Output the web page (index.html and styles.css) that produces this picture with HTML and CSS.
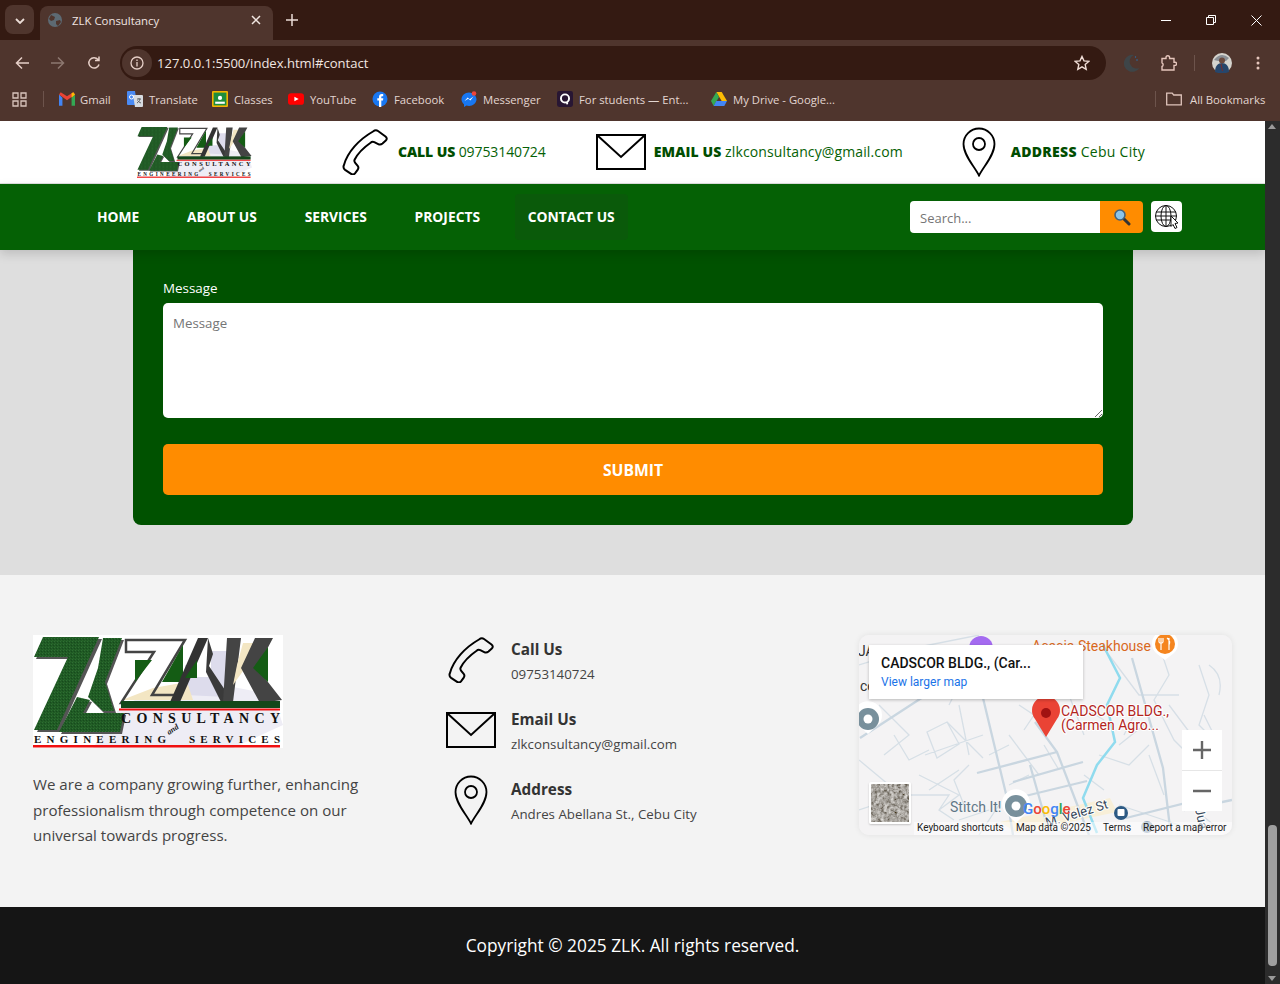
FILE: index.html
```html
<!DOCTYPE html>
<html lang="en">
<head>
    <meta charset="UTF-8">
    <meta name="viewport" content="width=device-width, initial-scale=1.0">
    <title>ZLK Consultancy</title>
    <link rel="stylesheet" href="styles.css">
</head>
<body>
    <!-- shared drawings -->
    <svg class="defs" width="0" height="0">
        <defs>
            <pattern id="grass" width="3" height="3" patternUnits="userSpaceOnUse">
                <rect width="3" height="3" fill="#1f5a24"/>
                <rect width="1" height="1" fill="#2f6e33"/>
                <rect x="2" y="1" width="1" height="1" fill="#174a1c"/>
                <rect x="1" y="2" width="1" height="1" fill="#286429"/>
            </pattern>
            <filter id="aerial" x="0" y="0" width="100%" height="100%">
                <feTurbulence type="fractalNoise" baseFrequency="0.3" numOctaves="3" seed="4"/>
                <feColorMatrix values="0.700 0.700 0 0 -0.300  0.700 0.700 0 0 -0.320  0.700 0.700 0 0 -0.350  0 0 0 0 1"/>
            </filter>
        </defs>
        <symbol id="phone" viewBox="0 0 46 46">
            <path d="M31 2.500c2-1.600 3.600-1.500 5-.5l7.500 5.500c1.600 1.300 1.600 2.800.3 4l-3.300 3c-1.500 1.300-2.700 1.400-4.300.6l-3.900-1.900c-1.400-.7-2.500-.5-3.700.5C21 19 15.500 25 12.700 30.500c-.6 1.200-.4 2.300.5 3.400l2.500 3c1 1.300.9 2.600-.1 4l-2.600 3.500c-1.100 1.300-2.400 1.400-3.900.4l-6-3.900c-1.600-1.200-2-2.600-1.300-4.500C5.500 23 17 10.500 31 2.500z" fill="none" stroke="#000" stroke-width="2"/>
        </symbol>
        <symbol id="mail" viewBox="0 0 50 36">
            <path d="M1 1h48v34H1zM1.500 1.500L25 23 48.500 1.500" fill="none" stroke="#000" stroke-width="2"/>
        </symbol>
        <symbol id="pin" viewBox="0 0 34 50">
            <path d="M17 48.500C12 39 1.500 28 1.500 17a15.500 15.500 0 0 1 31 0C32.500 28 22 39 17 48.500z" fill="none" stroke="#000" stroke-width="1.800"/>
            <circle cx="17" cy="17" r="6" fill="none" stroke="#000" stroke-width="1.800"/>
        </symbol>
    </svg>

    <div class="tabstrip">
        <button class="tab-menu"><svg width="10" height="6" viewBox="0 0 10 6"><path d="M1 1l4 4 4-4" fill="none" stroke="#eadcd6" stroke-width="1.800"/></svg></button>
        <div class="tab">
            <svg width="14" height="14" viewBox="0 0 14 14"><circle cx="7" cy="7" r="7" fill="#5d6a73"/><path d="M3 2l4 2-1 3-3 1-2-2zM8 8l4-1 1 2-3 4-2-2z" fill="#4f352d"/></svg>
            <span class="tab-title">ZLK Consultancy</span>
            <svg width="10" height="10" viewBox="0 0 10 10"><path d="M1 1l8 8M9 1l-8 8" stroke="#f1e6e1" stroke-width="1.500"/></svg>
        </div>
        <svg class="tab-new" width="12" height="12" viewBox="0 0 12 12"><path d="M6 0v12M0 6h12" stroke="#eadcd6" stroke-width="1.500"/></svg>
        <div class="win-btns">
            <svg width="10" height="10" viewBox="0 0 10 10"><path d="M0 5.500h10" stroke="#fff"/></svg>
            <svg width="10" height="10" viewBox="0 0 10 10"><path d="M.5 2.500h7v7h-7zM2.500 2.500v-2h7v7h-2" fill="none" stroke="#fff"/></svg>
            <svg width="11" height="11" viewBox="0 0 11 11"><path d="M.5.500l10 10M10.500.500l-10 10" stroke="#fff"/></svg>
        </div>
    </div>

    <div class="toolbar">
        <svg class="tool" width="14" height="14" viewBox="0 0 14 14"><path d="M14 7H2M7 1.500L1.500 7 7 12.500" fill="none" stroke="#e6cfc7" stroke-width="1.500"/></svg>
        <svg class="tool" width="14" height="14" viewBox="0 0 14 14"><path d="M0 7h12M7 1.500L12.500 7 7 12.500" fill="none" stroke="#8d7870" stroke-width="1.500"/></svg>
        <svg class="tool" width="14" height="14" viewBox="0 0 14 14"><path d="M12 8.500A5.200 5.200 0 1 1 11 3.500M12 .5v4H8" fill="none" stroke="#e6cfc7" stroke-width="1.500"/></svg>
        <div class="omnibox">
            <span class="site-info"><svg width="14" height="14" viewBox="0 0 14 14"><circle cx="7" cy="7" r="6" fill="none" stroke="#e6cfc7" stroke-width="1.300"/><path d="M7 6v4.500M7 3.500v1.400" stroke="#e6cfc7" stroke-width="1.300"/></svg></span>
            <span class="url">127.0.0.1:5500/index.html#contact</span>
            <svg class="star" width="16" height="16" viewBox="0 0 16 16"><path d="M8 1.500l2 4.400 4.800.5-3.600 3.200 1 4.700L8 11.900l-4.200 2.400 1-4.700L1.200 6.400 6 5.900z" fill="none" stroke="#f1dfd8" stroke-width="1.400"/></svg>
        </div>
        <svg class="ext-moon" width="16" height="18" viewBox="0 0 16 18"><path d="M10 1a8.500 8.500 0 1 0 5.500 13A6.500 6.500 0 0 1 10 1z" fill="#3e4548"/><circle cx="13" cy="6" r=".8" fill="#2a6fa8"/><circle cx="11.500" cy="3" r=".7" fill="#2a6fa8"/></svg>
        <svg class="ext-puzzle" width="16" height="16" viewBox="0 0 16 16"><path d="M1 3.500h4V2.500a1.800 1.800 0 0 1 3.600 0v1h4.400v3.700h1a1.600 1.600 0 0 1 0 3.200h-1V15H1v-3.500a2 2 0 0 0 0-3.600z" fill="none" stroke="#e6c6bc" stroke-width="1.400"/></svg>
        <span class="tool-sep"></span>
        <svg class="avatar" width="20" height="20" viewBox="0 0 20 20"><circle cx="10" cy="10" r="10" fill="#d5d3cd"/><path d="M2 7q7-9 15-2l-3 3H6z" fill="#8a8f95"/><path d="M3 19c0-6 3-9 7-9s7 3 7 9l-3 1H6z" fill="#27466b"/><circle cx="10" cy="7.500" r="3" fill="#6b4a3e"/><path d="M9 11l1.500 7" stroke="#7a2b2b"/></svg>
        <svg class="kebab" width="4" height="14" viewBox="0 0 4 14"><circle cx="2" cy="2" r="1.500" fill="#e6c6bc"/><circle cx="2" cy="7" r="1.500" fill="#e6c6bc"/><circle cx="2" cy="12" r="1.500" fill="#e6c6bc"/></svg>
    </div>

    <div class="bookmarks">
        <svg class="apps" width="15" height="15" viewBox="0 0 15 15"><path d="M1 1h5v5H1zM9 1h5v5H9zM1 9h5v5H1zM9 9h5v5H9z" fill="none" stroke="#d9c4bc" stroke-width="1.300"/></svg>
        <span class="bm-sep"></span>
        <span class="bm bm-gmail"><svg viewBox="0 0 14 12"><path d="M0 2v10h3V5z" fill="#4285f4"/><path d="M14 2v10h-3V5z" fill="#34a853"/><path d="M0 2l7 5 7-5-1.500-2L7 3.500 1.500 0z" fill="#ea4335"/><path d="M11 5l3-3-1.500-2L11 1z" fill="#fbbc04"/></svg>Gmail</span>
        <span class="bm bm-translate"><svg viewBox="0 0 16 16"><path d="M0 1a1 1 0 0 1 1-1h7l2 14H1a1 1 0 0 1-1-1z" fill="#4a8af4"/><path d="M6 4h9a1 1 0 0 1 1 1v10a1 1 0 0 1-1 1H8z" fill="#d7dbe0"/><path d="M10 8h4M12 7v1M13 8c-.5 2-1.500 3-3 4M10.500 9.500c.8 1.200 2 2 3.500 2.500" fill="none" stroke="#5f6368"/><circle cx="4.500" cy="6" r="2" fill="none" stroke="#fff"/></svg>Translate</span>
        <span class="bm bm-classes"><svg viewBox="0 0 15 15"><rect width="15" height="15" rx="1" fill="#f4b400"/><rect x="1.500" y="1.500" width="12" height="12" fill="#1e8e3e"/><rect x="3" y="10" width="9" height="2" fill="#fff"/><circle cx="7.500" cy="6.500" r="2" fill="#fff"/></svg>Classes</span>
        <span class="bm bm-youtube"><svg viewBox="0 0 15 13"><rect y="1" width="15" height="11" rx="3" fill="#f00"/><path d="M6 4.500l4 2-4 2z" fill="#fff"/></svg>YouTube</span>
        <span class="bm bm-facebook"><svg viewBox="0 0 15 16"><circle cx="7.500" cy="8" r="7.500" fill="#1877f2"/><path d="M6.500 16V9.500H4.800V7.300h1.700V6c0-1.900 1-3 2.800-3h1.400v2.200H9.700c-.7 0-.9.400-.9 1v1.100h2l-.3 2.200H8.800V16z" fill="#fff"/></svg>Facebook</span>
        <span class="bm bm-messenger"><svg viewBox="0 0 15 16"><path d="M7.500 1.500C3.400 1.500 0 4.500 0 8.300c0 2 1 3.800 2.500 5v2.700l2.500-1.400c.8.200 1.600.4 2.500.4 4.100 0 7.500-3 7.500-6.700s-3.400-6.800-7.500-6.800z" fill="#1877f2"/><path d="M3 10l3.200-3.500 2 1.700L12 5.500 8.800 9.500l-2-1.700z" fill="#fff"/><circle cx="12.500" cy="2.500" r="2.300" fill="#f04438"/></svg>Messenger</span>
        <span class="bm bm-quill"><svg viewBox="0 0 15 15"><rect width="15" height="15" rx="2" fill="#281633"/><circle cx="7.500" cy="7" r="3.800" fill="none" stroke="#fff" stroke-width="1.800"/><path d="M9.500 10.500v2" stroke="#fff" stroke-width="1.800"/></svg>For students — Ent...</span>
        <span class="bm bm-drive"><svg viewBox="0 0 16 14"><path d="M5.300 0h5.400l5.300 9h-5.300z" fill="#fbbc04"/><path d="M5.300 0L0 9l2.700 5 5.300-9z" fill="#34a853"/><path d="M5.300 9H16l-2.700 5H2.700z" fill="#4285f4"/></svg>My Drive - Google...</span>
        <span class="bm-sep bm-sep-end"></span>
        <span class="bm bm-all"><svg viewBox="0 0 16 13"><path d="M.7 12.300V.7h5.500l1.500 1.800h7.600v9.800z" fill="none" stroke="#dfc4bb" stroke-width="1.300"/></svg>All Bookmarks</span>
    </div>

    <div class="viewport">
        <div class="page">
            <header class="topbar">
                <svg class="top-logo" viewBox="0 0 250 113">
                    <path d="M85 75Q130 45 175 47L240 60 250 90 200 113H60z" fill="#eeedf5"/>
                    <path d="M152 60V30h12v12h14V16h16v46z" fill="#dddcec"/>
                    <path d="M12 4h57L27 97H4L38 24H3z" fill="#555"/>
                    <path d="M10 2h56L24 95H1L35 22H1z" fill="url(#grass)"/>
                    <path d="M72 5h19L74 49l9 29H71L57 64 67 35z" fill="#555"/>
                    <path d="M70 3h19L72 47l9 29H70L55 62 65 33z" fill="url(#grass)"/>
                    <path d="M46 64L28 99h61l4-19H52l7-13z" fill="#555"/>
                    <path d="M44 62L26 97h61l4-19H50l7-13z" fill="url(#grass)"/>
                    <path d="M89 65l31-12 34-6 6 18z" fill="#f3e6c3"/>
                    <path d="M93 5H152L119 60H146L140 68H88L121 17H93z" fill="none" stroke="#444" stroke-width="2.500"/>
                    <path d="M102 25h17l-17 22zM150 10l-21 37h21z" fill="#145c14"/>
                    <path d="M165 3h10l-28 64h-10z" fill="#333"/>
                    <path d="M175 3l5 16-4 12 24 36h-12l-15-30z" fill="#3a3a3a"/>
                    <path d="M164 25v18h-12z" fill="#145c14"/>
                    <path d="M194 3h14l-8 64h-10z" fill="#444"/>
                    <path d="M210 8h20l-30 42 4-20z" fill="#f3e6c3"/>
                    <path d="M222 3h18l-16 30 25 32-22 3-19-35z" fill="#444"/>
                    <path d="M235 12l-15 21 15 14z" fill="#145c14"/>
                    <rect x="88" y="66" width="159" height="7" fill="#14471a"/>
                    <rect x="86" y="73.500" width="161" height="2" fill="#f01010"/>
                    <rect y="110" width="247" height="2.500" fill="#f01010"/>
                    <text x="88" y="88" class="logo-big" textLength="159">CONSULTANCY</text>
                    <text x="1" y="108" class="logo-small" textLength="132">ENGINEERING</text>
                    <text x="156" y="108" class="logo-small" textLength="91">SERVICES</text>
                    <text x="136" y="100" class="logo-and" transform="rotate(-35 136 100)">and</text>
                </svg>
                <div class="top-item top-call">
                    <svg class="icon-phone"><use href="#phone"/></svg>
                    <p><b>CALL US</b> 09753140724</p>
                </div>
                <div class="top-item top-email">
                    <svg class="icon-mail"><use href="#mail"/></svg>
                    <p><b>EMAIL US</b> zlkconsultancy@gmail.com</p>
                </div>
                <div class="top-item top-address">
                    <svg class="icon-pin"><use href="#pin"/></svg>
                    <p><b>ADDRESS</b> Cebu City</p>
                </div>
            </header>

            <nav class="mainnav">
                <a href="#home">HOME</a>
                <a href="#about">ABOUT US</a>
                <a href="#services">SERVICES</a>
                <a href="#projects">PROJECTS</a>
                <a href="#contact" class="active">CONTACT US</a>
                <form class="search">
                    <input type="text" placeholder="Search...">
                    <button type="button"><svg width="18" height="18" viewBox="0 0 18 18"><path d="M10.500 10.500l5.500 5.500" stroke="#333" stroke-width="3" stroke-linecap="round"/><circle cx="7" cy="7" r="5" fill="#8cc4ea" stroke="#44617a" stroke-width="1.600"/></svg></button>
                </form>
                <span class="lang"><svg width="26" height="26" viewBox="0 0 26 26"><g fill="none" stroke="#111" stroke-width="1"><circle cx="12" cy="12" r="10.500"/><ellipse cx="12" cy="12" rx="5" ry="10.500"/><path d="M12 1.500v21M2 8h20M2 16h20M1.500 12h21"/></g><path d="M17 12l7 7-3 .5 2 4-2 1-2-4-2 2z" fill="#fff" stroke="#111"/></svg></span>
            </nav>

            <section class="contact">
                <form class="contact-form">
                    <label for="message">Message</label>
                    <textarea id="message" placeholder="Message"></textarea>
                    <button type="button">SUBMIT</button>
                </form>
            </section>

            <footer class="site-footer">
                <div class="about">
                    <svg class="footer-logo" viewBox="0 0 250 113">
                        <rect width="250" height="113" fill="#fff"/>
                        <path d="M85 75Q130 45 175 47L240 60 250 90 200 113H60z" fill="#eeedf5"/>
                        <path d="M152 60V30h12v12h14V16h16v46z" fill="#dddcec"/>
                        <path d="M12 4h57L27 97H4L38 24H3z" fill="#555"/>
                        <path d="M10 2h56L24 95H1L35 22H1z" fill="url(#grass)"/>
                        <path d="M72 5h19L74 49l9 29H71L57 64 67 35z" fill="#555"/>
                        <path d="M70 3h19L72 47l9 29H70L55 62 65 33z" fill="url(#grass)"/>
                        <path d="M46 64L28 99h61l4-19H52l7-13z" fill="#555"/>
                        <path d="M44 62L26 97h61l4-19H50l7-13z" fill="url(#grass)"/>
                        <path d="M89 65l31-12 34-6 6 18z" fill="#f3e6c3"/>
                        <path d="M93 5H152L119 60H146L140 68H88L121 17H93z" fill="none" stroke="#444" stroke-width="2.500"/>
                        <path d="M102 25h17l-17 22zM150 10l-21 37h21z" fill="#145c14"/>
                        <path d="M165 3h10l-28 64h-10z" fill="#333"/>
                        <path d="M175 3l5 16-4 12 24 36h-12l-15-30z" fill="#3a3a3a"/>
                        <path d="M164 25v18h-12z" fill="#145c14"/>
                        <path d="M194 3h14l-8 64h-10z" fill="#444"/>
                        <path d="M210 8h20l-30 42 4-20z" fill="#f3e6c3"/>
                        <path d="M222 3h18l-16 30 25 32-22 3-19-35z" fill="#444"/>
                        <path d="M235 12l-15 21 15 14z" fill="#145c14"/>
                        <rect x="88" y="66" width="159" height="7" fill="#14471a"/>
                        <rect x="86" y="73.500" width="161" height="2" fill="#f01010"/>
                        <rect y="110" width="247" height="2.500" fill="#f01010"/>
                        <text x="88" y="88" class="logo-big" textLength="159">CONSULTANCY</text>
                        <text x="1" y="108" class="logo-small" textLength="132">ENGINEERING</text>
                        <text x="156" y="108" class="logo-small" textLength="91">SERVICES</text>
                        <text x="136" y="100" class="logo-and" transform="rotate(-35 136 100)">and</text>
                    </svg>
                    <p>We are a company growing further, enhancing professionalism through competence on our universal towards progress.</p>
                </div>
                <div class="reach">
                    <div class="reach-item">
                        <span class="reach-icon"><svg class="icon-phone"><use href="#phone"/></svg></span>
                        <div><h4>Call Us</h4><p>09753140724</p></div>
                    </div>
                    <div class="reach-item">
                        <span class="reach-icon"><svg class="icon-mail"><use href="#mail"/></svg></span>
                        <div><h4>Email Us</h4><p>zlkconsultancy@gmail.com</p></div>
                    </div>
                    <div class="reach-item">
                        <span class="reach-icon"><svg class="icon-pin"><use href="#pin"/></svg></span>
                        <div><h4>Address</h4><p>Andres Abellana St., Cebu City</p></div>
                    </div>
                </div>
                <div class="map">
                    <svg class="map-roads" width="373" height="200" viewBox="0 0 373 200">
                        <rect width="373" height="200" fill="#f4f3f4"/>
                        <path d="M141 187L251 163l7 14-100 21z" fill="#f8efd8"/>
                        <g fill="none" stroke="#d6dfe6" stroke-width="1.300">
                            <path d="M0 30L60 12 120 0M20 70l30 30-25 20M68 97l20-10 12 22-22 14zM88 87l36 36M100 70l10 50M66 120l58-20M150 100l30 40M150 150l20-10M10 150l40 10M50 160h40l-10 15 15 10M60 140l40 20-20 15M100 135l-30 20M300 10l10 30-15 25 20 40 30 30M340 30l10 30-10 30 20 20M350 30q15 10 10 30M310 70l30 40M250 20l30 40h40M0 175l30-10M240 120l30 10 20-20M140 170l-20 30M260 170l60 20M100 50l-10 20M150 110l-20 10M160 70l15 10-10 15M220 70l25 15M200 135l-15-25M210 60l15 40M260 110l25-20M330 170l25 20M35 100l15 25 20-10M0 125l30 25M110 130l-15 15 10 25M130 175l-30 10M280 70l-15 30M290 120l15 40M345 80l15 30M225 140l20 15"/>
                        </g>
                        <g fill="none" stroke="#c9d6e0" stroke-width="2.300">
                            <path d="M1 103L64 62 100 40M124 63l24 100 6 37M176 87l22 30 23 60 9 23M118 138l80-21M154 147l70-20M158 163l70-17M171 130l17 60M273 23l31 110 7 60M325 175l48-10M267 183l60-15 20 5"/>
                        </g>
                        <path d="M244 10l17 33-13 27 8 37-18 23-14 33 14 35" fill="none" stroke="#90dbee" stroke-width="2.500"/>
                        <circle cx="122" cy="13" r="12" fill="#a46bf0"/>
                        <text x="173" y="16" class="map-poi">Acacia Steakhouse</text>
                        <path d="M306 25l-9-7a13 13 0 1 1 18 0z" fill="#fff"/>
                        <circle cx="306" cy="9" r="10" fill="#f5851f"/>
                        <path d="M302 3v12M310 3v12M300 3v4q2 3 4 0v-4M308 3q4 3 2 7" fill="none" stroke="#fff" stroke-width="1.200"/>
                        <text x="-1" y="21" class="map-label">JA</text>
                        <text x="1" y="56" class="map-label">ce</text>
                        <path d="M9 99l-10-9a14 14 0 1 1 20 0z" fill="#fff"/>
                        <circle cx="9" cy="84" r="11" fill="#78909c"/><circle cx="9" cy="84" r="4.500" fill="#fff"/>
                        <path d="M187 102l-11-18a14 14 0 1 1 22 0z" fill="#ea4335"/>
                        <circle cx="187" cy="78" r="5" fill="#a11212"/>
                        <text x="202" y="81" class="map-pin-label">CADSCOR BLDG.,</text>
                        <text x="202" y="95" class="map-pin-label">(Carmen Agro...</text>
                        <text x="91" y="177" class="map-stitch">Stitch It!</text>
                        <path d="M157 188l-10-10a14 14 0 1 1 20 0z" fill="#fff"/>
                        <circle cx="157" cy="171" r="11" fill="#78909c"/><circle cx="157" cy="171" r="4.500" fill="#fff"/>
                        <text x="188" y="192" class="map-street" transform="rotate(-17 188 192)">M. Velez St</text>
                        <circle cx="262" cy="178" r="7" fill="#2d5a84"/>
                        <rect x="258.500" y="174" width="7" height="7" rx="1" fill="#fff"/>
                        <circle cx="288" cy="192" r="6" fill="#2d5a84" opacity="0.5"/>
                        <text x="164" y="179" class="map-google"><tspan fill="#4285f4">G</tspan><tspan fill="#ea4335">o</tspan><tspan fill="#fbbc04">o</tspan><tspan fill="#4285f4">g</tspan><tspan fill="#34a853">l</tspan><tspan fill="#ea4335">e</tspan></text>
                        <text x="336" y="174" class="map-street" transform="rotate(78 336 174)">Jua</text>
                        <rect x="55" y="187" width="318" height="13" fill="#fff" opacity="0.5"/>
                        <g class="map-foot">
                            <text x="58" y="196">Keyboard shortcuts</text>
                            <text x="157" y="196">Map data ©2025</text>
                            <text x="244" y="196">Terms</text>
                            <text x="284" y="196">Report a map error</text>
                        </g>
                    </svg>
                    <div class="map-card">
                        <strong>CADSCOR BLDG., (Car...</strong>
                        <a href="#map">View larger map</a>
                    </div>
                    <div class="map-zoom">
                        <span><svg width="18" height="18" viewBox="0 0 18 18"><path d="M9 0v18M0 9h18" stroke="#666" stroke-width="2.400"/></svg></span>
                        <span><svg width="18" height="18" viewBox="0 0 18 18"><path d="M0 9h18" stroke="#666" stroke-width="2.400"/></svg></span>
                    </div>
                    <div class="map-thumb"><svg width="38" height="38"><rect width="38" height="38" filter="url(#aerial)"/></svg></div>
                </div>
            </footer>

            <div class="copyright">Copyright © 2025 ZLK. All rights reserved.</div>
        </div>

        <div class="scrollbar">
            <i class="arrow-up"></i>
            <span class="thumb"></span>
            <i class="arrow-down"></i>
        </div>
    </div>
</body>
</html>
```

FILE: styles.css
```css
* {
    box-sizing: border-box;
}
html, body {
    margin: 0;
    height: 984px;
    overflow: hidden;
}
body {
    font-family: "Open Sans", "Noto Sans", sans-serif;
    display: flex;
    flex-direction: column;
    background-color: #4f352d;
}
.defs {
    position: absolute;
}
p, h4 {
    margin: 0;
}

/* browser chrome */
.tabstrip {
    height: 40px;
    flex: none;
    display: flex;
    align-items: center;
    background-color: #341a12;
    padding-left: 5px;
}
.tab-menu {
    width: 29px;
    height: 29px;
    margin-top: -1px;
    border: none;
    border-radius: 8px;
    background-color: #4f352d;
    padding: 0;
}
.tab {
    width: 233px;
    height: 34px;
    margin: 6px 0 0 6px;
    padding: 0 12px 6px 8px;
    display: flex;
    align-items: center;
    background-color: #4f352d;
    border-radius: 8px 8px 0 0;
}
.tab-title {
    flex: 1;
    margin-left: 10px;
    color: #efe5e1;
    font-size: 11.400px;
}
.tab-new {
    margin-left: 13px;
}
.win-btns {
    margin-left: auto;
    width: 138px;
    display: flex;
    justify-content: space-between;
    padding: 0 18px 0 19px;
}
.toolbar {
    height: 44px;
    flex: none;
    display: flex;
    align-items: center;
    background-color: #4f352d;
    padding: 2px 0 0 15px;
}
.tool {
    margin-right: 22px;
}
.toolbar .tool:nth-child(3) {
    margin-right: 19px;
}
.omnibox {
    width: 986px;
    height: 34px;
    display: flex;
    align-items: center;
    background-color: #341a12;
    border-radius: 17px;
    padding: 0 16px 0 2px;
}
.site-info {
    width: 30px;
    height: 28px;
    display: flex;
    align-items: center;
    justify-content: center;
    background-color: #4f352d;
    border-radius: 14px;
}
.url {
    margin-left: 5px;
    color: #f1e6e1;
    font-size: 13.050px;
    flex: 1;
}
.ext-moon {
    margin-left: 18px;
}
.ext-puzzle {
    margin-left: 21px;
}
.tool-sep {
    width: 1px;
    height: 16px;
    margin-left: 17px;
    background-color: #6d544c;
}
.avatar {
    margin-left: 17px;
}
.kebab {
    margin-left: 24px;
}
.bookmarks {
    height: 37px;
    flex: none;
    display: flex;
    align-items: center;
    gap: 16px;
    background-color: #4f352d;
    padding: 0 0 7px 12px;
}
.bm {
    flex: none;
    display: flex;
    align-items: center;
    gap: 6px;
    color: #e3d6d1;
    font-size: 11.300px;
    white-space: nowrap;
}
.bm svg {
    width: 16px;
    height: 16px;
    flex: none;
}
.bm-gmail { width: 52px; margin-left: -1px; gap: 5px; }
.bm-translate { width: 69px; }
.bm-classes { width: 60px; }
.bm-youtube { width: 68px; }
.bm-facebook { width: 73px; }
.bm-messenger { width: 80px; }
.bm-quill { width: 138px; }
.bm-drive { width: 128px; }
.bm-sep {
    width: 1px;
    height: 16px;
    background-color: #6d544c;
}
.bm-sep-end {
    margin-left: auto;
}
.bm-all {
    width: 100px;
    gap: 8px;
    margin-right: 14px;
    margin-left: -6px;
}

/* page */
.viewport {
    flex: 1;
    min-height: 0;
    display: flex;
}
.page {
    flex: 1;
    min-width: 0;
    background-color: #dedede;
}
.scrollbar {
    width: 15px;
    position: relative;
    background-color: #2c2c2c;
}
.scrollbar i {
    position: absolute;
    left: 3px;
    border-left: 4.500px solid transparent;
    border-right: 4.500px solid transparent;
}
.arrow-up {
    top: 3px;
    border-bottom: 5px solid #9a9a9a;
}
.arrow-down {
    bottom: 3px;
    border-top: 5px solid #9a9a9a;
}
.thumb {
    position: absolute;
    left: 3px;
    right: 3px;
    top: 704px;
    height: 141px;
    border-radius: 4px;
    background-color: #9f9f9f;
}

.topbar {
    height: 63px;
    display: flex;
    align-items: center;
    background-color: #fff;
    padding-left: 137px;
    border-bottom: 1px solid #e0e0e0;
}
.top-logo {
    width: 115px;
    height: 52px;
}
.top-item {
    display: flex;
    align-items: center;
    font-size: 14px;
    color: #056105;
    white-space: nowrap;
}
.top-item p {
    margin-top: -2px;
}
.top-item b {
    color: #004d00;
    font-weight: 800;
}
.icon-phone {
    width: 46px;
    height: 46px;
}
.icon-mail {
    width: 50px;
    height: 36px;
}
.icon-pin {
    width: 34px;
    height: 50px;
}
.top-call {
    margin-left: 90px;
    gap: 10px;
    letter-spacing: -0.1px;
}
.top-email {
    margin-left: 50px;
    gap: 8px;
    letter-spacing: 0.12px;
}
.top-address {
    margin-left: 59px;
    gap: 15px;
    letter-spacing: 0.28px;
}
.mainnav {
    height: 66px;
    display: flex;
    align-items: center;
    gap: 21.800px;
    padding-left: 84px;
    background-color: #056105;
    box-shadow: 0 4px 10px rgba(0, 0, 0, 0.15);
    position: relative;
}
.mainnav a {
    height: 46px;
    padding: 0 13px 2px;
    display: flex;
    align-items: center;
    color: #fff;
    font-size: 13.800px;
    font-weight: 700;
    text-decoration: none;
    border-radius: 4px;
}
.mainnav a.active {
    background-color: #0a5a0a;
}
.search {
    margin-left: auto;
    display: flex;
    height: 32px;
}
.search input {
    width: 190px;
    border: none;
    padding: 2px 10px 0;
    font: 13px "Open Sans", sans-serif;
    border-radius: 4px 0 0 4px;
    background-color: #fff;
}
.search button {
    width: 43px;
    border: none;
    padding: 0;
    display: flex;
    align-items: center;
    justify-content: center;
    background-color: #ff8c00;
    border-radius: 0 4px 4px 0;
}
.lang {
    width: 31px;
    height: 31px;
    margin: 0 83px 1px -13.800px;
    display: flex;
    align-items: center;
    justify-content: center;
    background-color: #fff;
    border-radius: 4px;
}
.contact {
    height: 325px;
    padding: 0 132px 50px 133px;
}
.contact-form {
    height: 275px;
    display: flex;
    flex-direction: column;
    padding: 29px 30px 30px;
    background-color: #005200;
    border-radius: 0 0 8px 8px;
}
.contact-form label {
    height: 24px;
    color: #fff;
    font-size: 13.400px;
    font-weight: 500;
}
.contact-form textarea {
    height: 115px;
    flex: none;
    border: none;
    border-radius: 5px;
    padding: 11px 10px;
    font: 13.300px "Open Sans", sans-serif;
    background-color: #fff;
}
.contact-form button {
    height: 51px;
    flex: none;
    margin-top: 26px;
    border: none;
    border-radius: 5px;
    background-color: #ff8c00;
    color: #fff;
    font: 700 15.700px "Open Sans", sans-serif;
}

/* footer */
.site-footer {
    height: 332px;
    display: flex;
    background-color: #f3f3f3;
    padding: 60px 33px 0;
}
.about {
    width: 413px;
}
.footer-logo {
    display: block;
    width: 250px;
    height: 113px;
}
.logo-big {
    font: 700 14px "Liberation Serif", serif;
    fill: #111;
}
.logo-small {
    font: 700 11px "Liberation Serif", serif;
    fill: #111;
}
.logo-and {
    font: italic 700 8px "Liberation Serif", serif;
    fill: #111;
}
.about p {
    width: 350px;
    margin-top: 24px;
    font-size: 15.100px;
    line-height: 25.600px;
    color: #444;
}
.reach {
    width: 413px;
    display: flex;
    flex-direction: column;
    gap: 20px;
}
.reach-item {
    height: 50px;
    display: flex;
    align-items: center;
    gap: 15px;
}
.reach-item div {
    padding-top: 2px;
}
.reach-icon {
    width: 50px;
    display: flex;
    justify-content: center;
}
.reach-item h4 {
    font-size: 15.300px;
    font-weight: 700;
    color: #333;
    margin-bottom: 6px;
}
.reach-item p {
    font-size: 13.300px;
    color: #444;
}
.map {
    width: 373px;
    height: 200px;
    position: relative;
    overflow: hidden;
    border-radius: 10px;
    box-shadow: 0 0 6px rgba(0, 0, 0, 0.08);
}
.map-roads {
    display: block;
}
.map-poi {
    font: 14px Roboto, sans-serif;
    fill: #d9681d;
}
.map-label {
    font: 14px Roboto, sans-serif;
    fill: #333;
}
.map-pin-label {
    font: 14px Roboto, sans-serif;
    fill: #b3261e;
    paint-order: stroke;
    stroke: #fff;
    stroke-width: 2px;
}
.map-stitch {
    font: 14px Roboto, sans-serif;
    fill: #5f7686;
}
.map-street {
    font: 13px Roboto, sans-serif;
    fill: #37485a;
    paint-order: stroke;
    stroke: #fff;
    stroke-width: 2px;
}
.map-google {
    font: 500 15px Roboto, sans-serif;
}
.map-foot {
    font: 10px Roboto, sans-serif;
    fill: #222;
}
.map-card {
    position: absolute;
    left: 10px;
    top: 10px;
    width: 214px;
    height: 54px;
    padding: 11px 12px;
    background-color: #fff;
    box-shadow: 0 1px 3px rgba(0, 0, 0, 0.25);
    font-family: Roboto, sans-serif;
}
.map-card strong {
    display: block;
    font-size: 14px;
    font-weight: 500;
    color: #111;
    line-height: 15px;
}
.map-card a {
    display: block;
    margin-top: 4px;
    font-size: 12px;
    color: #1a73e8;
    text-decoration: none;
}
.map-zoom {
    position: absolute;
    left: 323px;
    top: 95px;
    width: 40px;
    height: 81px;
    background-color: #fff;
}
.map-zoom span {
    height: 40px;
    display: flex;
    align-items: center;
    justify-content: center;
}
.map-zoom span + span {
    height: 41px;
    border-top: 1px solid #e6e6e6;
}
.map-thumb {
    position: absolute;
    left: 10px;
    top: 147px;
    width: 42px;
    height: 42px;
    border: 2px solid #fff;
    border-radius: 2px;
    box-shadow: 0 1px 2px rgba(0, 0, 0, 0.2);
}
.map-thumb svg {
    display: block;
}
.copyright {
    height: 77px;
    display: flex;
    align-items: center;
    justify-content: center;
    background-color: #151515;
    color: #fff;
    font-size: 17.300px;
}
```
